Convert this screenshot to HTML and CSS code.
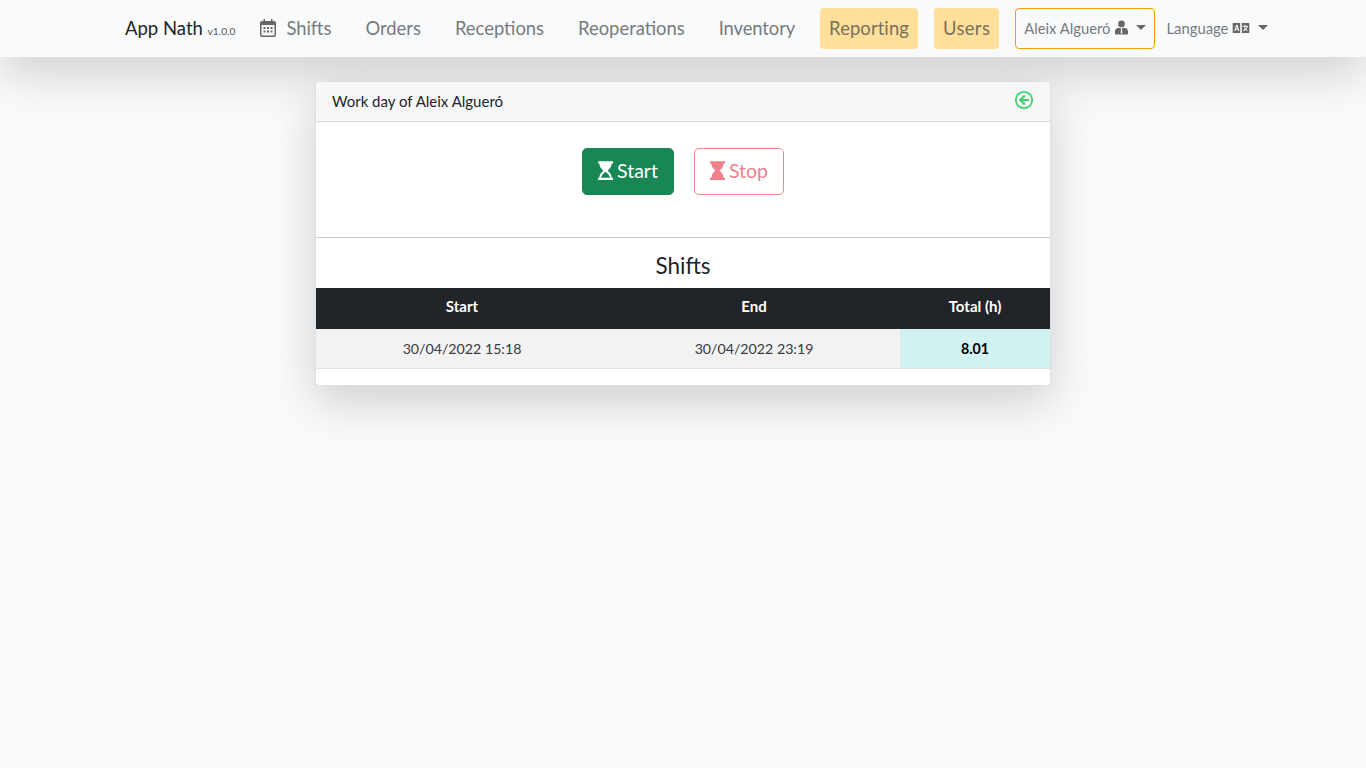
FILE: index.html

```html
<!DOCTYPE html>
<html>
<head>
    <title>App Nath</title>
    <link rel="stylesheet" href="styles.css">
</head>
<body>
    <nav class="navbar">
        <a class="brand">App Nath <small>v1.0.0</small></a>
        <a class="nav-link icon-link">
            <svg class="calendar" viewBox="0 0 16 18"><path fill-rule="evenodd" d="M3.500 0h1.500v2h6V0h1.500v2H14a2 2 0 0 1 2 2v12a2 2 0 0 1-2 2H2a2 2 0 0 1-2-2V4a2 2 0 0 1 2-2h1.500V0zM1.500 6v10c0 .3.200.5.500.5h12c.3 0 .5-.2.5-.5V6h-13z"/><path d="M3.500 8h2v2h-2zM7 8h2v2H7zM10.500 8h2v2h-2zM3.500 11.500h2v2h-2zM7 11.500h2v2H7zM10.500 11.500h2v2h-2z"/></svg>
            Shifts
        </a>
        <a class="nav-link">Orders</a>
        <a class="nav-link">Receptions</a>
        <a class="nav-link">Reoperations</a>
        <a class="nav-link inventory">Inventory</a>
        <a class="nav-link warn reporting">Reporting</a>
        <a class="nav-link warn users">Users</a>
        <a class="user-btn">Aleix Algueró
            <svg class="small-icon" viewBox="0 0 14 15"><circle cx="7" cy="3.600" r="3.600"/><path fill-rule="evenodd" d="M3.500 8h7c2 0 3.500 1.500 3.500 3.500V14a1 1 0 0 1-1 1H1a1 1 0 0 1-1-1v-2.500C0 9.500 1.500 8 3.500 8zM6 8l.5 1.500L6 14h2l-.5-4.500L8 8H6z"/></svg>
            <span class="caret"></span>
        </a>
        <a class="lang-btn">Language
            <svg class="lang-icon" viewBox="0 0 20 12"><path fill-rule="evenodd" d="M1 0h8v12H1a1 1 0 0 1-1-1V1a1 1 0 0 1 1-1zm3 2.500L2 9.500h1.400l.4-1.500h2.400l.4 1.500H8L6 2.500H4zm1 1.800L5.800 7H4.200L5 4.300z"/><path fill-rule="evenodd" d="M11 0h8a1 1 0 0 1 1 1v10a1 1 0 0 1-1 1h-8V0zm3.200 2.200v1.300H12v1.200h4.600c-.3.900-.8 1.600-1.300 2.100-.4-.4-.7-.8-1-1.300l-1 .6c.3.600.7 1.100 1.100 1.500-.6.400-1.300.8-2 1l.5 1.100c.9-.3 1.700-.7 2.400-1.300.7.500 1.500 1 2.400 1.300l.4-1.100c-.7-.2-1.400-.6-2-1 .8-.8 1.400-1.800 1.700-2.900h.6V3.500h-2.800V2.200h-1.400z"/></svg>
            <span class="caret"></span>
        </a>
    </nav>

    <div class="page">
        <div class="card">
            <div class="card-header">
                <span>Work day of Aleix Algueró</span>
                <svg class="back" viewBox="0 0 20 20"><circle cx="10" cy="10" r="8.200" fill="none" stroke="currentColor" stroke-width="1.800"/><path d="M10 4.800 4.800 10l5.200 5.200 1.500-1.500-2.600-2.600h6.300V8.900H8.900l2.600-2.600z" fill="currentColor"/></svg>
            </div>
            <div class="actions">
                <button class="btn btn-start">
                    <svg class="hourglass" viewBox="0 0 16 20"><path fill-rule="evenodd" d="M0 0h16v2.400h-1.400c0 3.400-2.400 5.800-4.400 7.600 2 1.800 4.400 4.200 4.400 7.600H16V20H0v-2.400h1.400c0-3.400 2.400-5.800 4.400-7.600-2-1.800-4.400-4.200-4.400-7.600H0V0zm3.200 17.600h9.600c-.2-2.300-2.700-4.900-4.800-6.400-2.100 1.500-4.600 4.100-4.800 6.400z"/></svg>
                    Start
                </button>
                <button class="btn btn-stop">
                    <svg class="hourglass" viewBox="0 0 16 20"><path d="M0 0h16v2.400h-1.400c0 3.400-2.400 5.800-4.400 7.600 2 1.800 4.400 4.200 4.400 7.600H16V20H0v-2.400h1.400c0-3.400 2.400-5.800 4.400-7.600-2-1.800-4.400-4.200-4.400-7.600H0V0z"/></svg>
                    Stop
                </button>
            </div>
            <hr>
            <h4>Shifts</h4>
            <table>
                <thead>
                    <tr>
                        <th class="col-start">Start</th>
                        <th class="col-end">End</th>
                        <th>Total (h)</th>
                    </tr>
                </thead>
                <tbody>
                    <tr>
                        <td>30/04/2022 15:18</td>
                        <td>30/04/2022 23:19</td>
                        <td class="total">8.01</td>
                    </tr>
                </tbody>
            </table>
        </div>
    </div>
</body>
</html>
```

FILE: styles.css

```css
* {
    box-sizing: border-box;
}

body {
    margin: 0;
    min-height: 100vh;
    background-color: #f9fafc;
    color: #212529;
    font-family: "Lato", "Open Sans", sans-serif;
    font-size: 15px;
}

.navbar {
    position: relative;
    z-index: 2;
    display: flex;
    align-items: center;
    height: 57px;
    padding-left: 125px;
    background-color: #f9fafb;
    box-shadow: 0 16px 48px rgba(0, 0, 0, 0.175);
}

.brand {
    margin-right: 25px;
    padding-bottom: 2px;
    font-size: 18.500px;
    color: #212529;
    white-space: nowrap;
}

.brand small {
    font-size: 10.200px;
    color: #555;
}

.nav-link {
    margin: 0 8px;
    padding: 9px;
    height: 41px;
    line-height: 23px;
    border-radius: 4px;
    font-size: 18.400px;
    color: #777a7e;
    white-space: nowrap;
}

.inventory {
    letter-spacing: -0.1px;
}

.reporting {
    letter-spacing: 0.1px;
}

.users {
    letter-spacing: 0.4px;
}

.icon-link {
    display: flex;
    align-items: center;
    gap: 10px;
    margin-left: 0;
    padding-left: 0;
}

.calendar {
    width: 16px;
    height: 18px;
    margin-top: -2px;
    fill: #666;
}

.warn {
    background-color: #ffdf9a;
    color: #79705a;
}

.user-btn {
    display: flex;
    align-items: center;
    gap: 4px;
    height: 41px;
    margin-left: 8px;
    margin-right: 12px;
    padding: 0 8px 2px;
    border: 1px solid #f39c12;
    border-radius: 4px;
    font-size: 14.800px;
    color: #777a7e;
    white-space: nowrap;
}

.lang-btn {
    display: flex;
    align-items: center;
    gap: 4px;
    padding-bottom: 2px;
    font-size: 14.800px;
    color: #777a7e;
    white-space: nowrap;
}

.small-icon {
    width: 13px;
    height: 15px;
    fill: #666;
}

.lang-icon {
    width: 18px;
    height: 10px;
    fill: #666;
}

.caret {
    width: 0;
    height: 0;
    margin-left: 4px;
    border-top: 5px solid #666;
    border-left: 5px solid transparent;
    border-right: 5px solid transparent;
}

.page {
    display: flex;
    justify-content: center;
    padding-top: 24px;
}

.card {
    position: relative;
    z-index: 3;
    width: 736px;
    height: 305px;
    background-color: #fff;
    border: 1px solid rgba(0, 0, 0, 0.125);
    border-radius: 4px;
    box-shadow: 0 16px 48px rgba(0, 0, 0, 0.175);
}

.card-header {
    display: flex;
    align-items: center;
    justify-content: space-between;
    height: 40px;
    padding: 0 16px 2px;
    background-color: #f7f7f7;
    border-bottom: 1px solid rgba(0, 0, 0, 0.125);
    border-radius: 3px 3px 0 0;
}

.back {
    width: 20px;
    height: 20px;
    margin-top: -1px;
    color: #3ecf6e;
}

.actions {
    display: flex;
    justify-content: center;
    gap: 20px;
    padding-top: 26px;
    height: 115px;
}

.btn {
    display: flex;
    align-items: center;
    justify-content: center;
    gap: 4px;
    height: 47px;
    padding: 0 0 2px;
    border-radius: 5px;
    font-family: inherit;
    font-size: 19.500px;
}

.hourglass {
    width: 15px;
    height: 19px;
    fill: currentColor;
}

.btn-start {
    width: 92px;
    background-color: #198754;
    border: 1px solid #198754;
    color: #fff;
}

.btn-stop {
    width: 90px;
    background-color: #fff;
    border: 1px solid #ea868f;
    color: #f0808c;
}

hr {
    margin: 0;
    border: 0;
    border-top: 1px solid #c9c9c9;
}

h4 {
    margin: 0;
    height: 50px;
    padding-top: 14px;
    line-height: 27px;
    text-align: center;
    font-size: 22.500px;
    font-weight: 400;
}

table {
    width: 100%;
    border-collapse: collapse;
    text-align: center;
}

th {
    height: 41px;
    padding: 0 0 5px;
    background-color: #212529;
    color: #fff;
    font-weight: 700;
}

.col-start,
.col-end {
    width: 292px;
}

td {
    height: 39px;
    padding: 0;
    background-color: #f2f2f2;
    border-bottom: 1px solid #dee2e6;
    color: #36393d;
    font-size: 14.200px;
}

.total {
    background-color: #d2f1f1;
    color: #000;
    font-weight: 700;
}
```
